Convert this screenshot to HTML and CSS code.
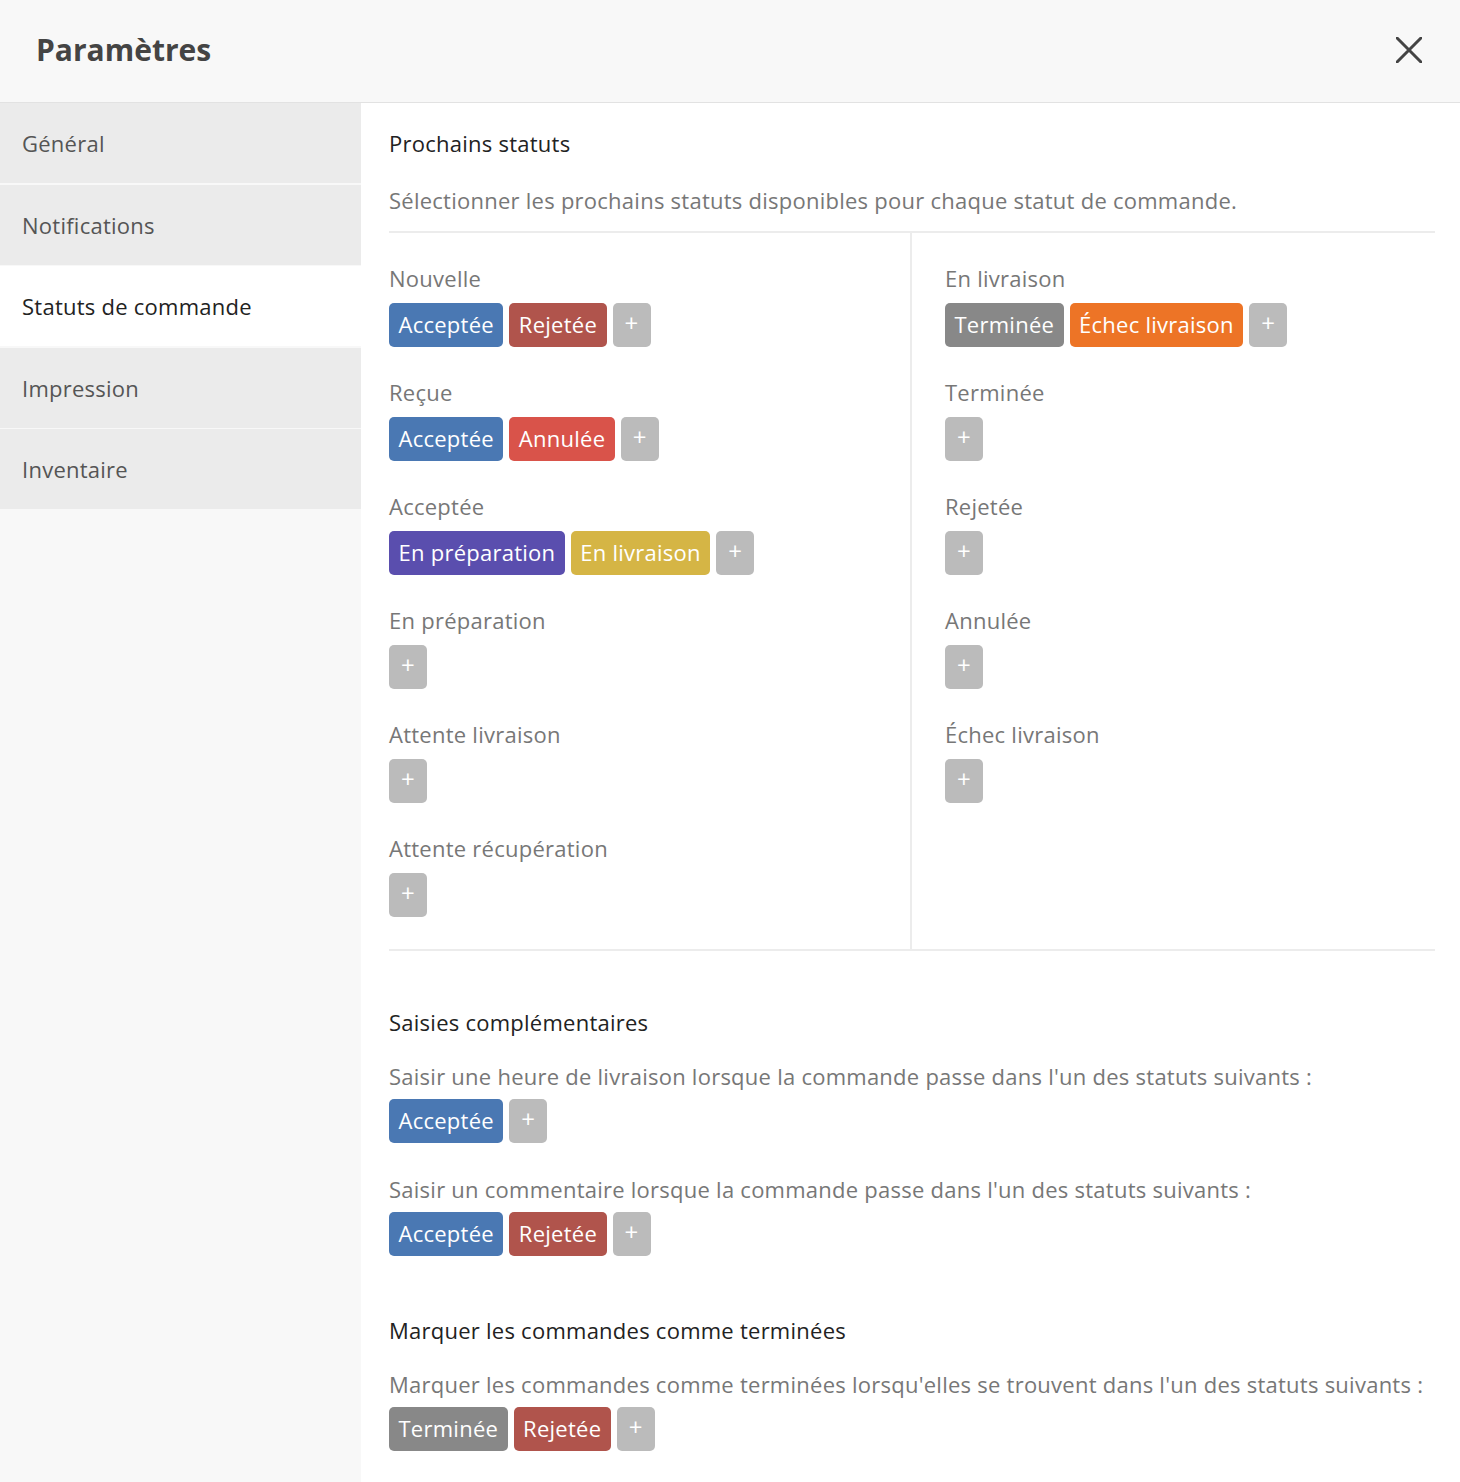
FILE: index.html
```html
<!DOCTYPE html>
<html lang="fr">
<head>
    <meta charset="UTF-8">
    <meta name="viewport" content="width=device-width, initial-scale=1.0">
    <title>Paramètres</title>
    <link rel="stylesheet" href="styles.css">
</head>
<body>

<div class="header">
    <h1 class="header-title">Paramètres</h1>
    <button class="close-btn" aria-label="Fermer">
        <svg width="26" height="26" viewBox="0 0 26 26">
            <path d="M1 1 L25 25 M25 1 L1 25" stroke="#444" stroke-width="3" stroke-linecap="round"/>
        </svg>
    </button>
</div>

<div class="layout">
    <nav class="sidebar">
        <a class="nav-item">Général</a>
        <a class="nav-item">Notifications</a>
        <a class="nav-item active">Statuts de commande</a>
        <a class="nav-item">Impression</a>
        <a class="nav-item">Inventaire</a>
    </nav>

    <main class="content">
        <h2 class="section-title">Prochains statuts</h2>
        <p class="section-desc">Sélectionner les prochains statuts disponibles pour chaque statut de commande.</p>

        <div class="status-grid">
            <div class="status-col">
                <div class="status-group">
                    <div class="status-label">Nouvelle</div>
                    <div class="tags">
                        <span class="tag tag-accepted">Acceptée</span>
                        <span class="tag tag-rejected">Rejetée</span>
                        <span class="tag tag-add">+</span>
                    </div>
                </div>
                <div class="status-group">
                    <div class="status-label">Reçue</div>
                    <div class="tags">
                        <span class="tag tag-accepted">Acceptée</span>
                        <span class="tag tag-cancelled">Annulée</span>
                        <span class="tag tag-add">+</span>
                    </div>
                </div>
                <div class="status-group">
                    <div class="status-label">Acceptée</div>
                    <div class="tags">
                        <span class="tag tag-preparing">En préparation</span>
                        <span class="tag tag-delivering">En livraison</span>
                        <span class="tag tag-add">+</span>
                    </div>
                </div>
                <div class="status-group">
                    <div class="status-label">En préparation</div>
                    <div class="tags">
                        <span class="tag tag-add">+</span>
                    </div>
                </div>
                <div class="status-group">
                    <div class="status-label">Attente livraison</div>
                    <div class="tags">
                        <span class="tag tag-add">+</span>
                    </div>
                </div>
                <div class="status-group">
                    <div class="status-label">Attente récupération</div>
                    <div class="tags">
                        <span class="tag tag-add">+</span>
                    </div>
                </div>
            </div>

            <div class="status-col">
                <div class="status-group">
                    <div class="status-label">En livraison</div>
                    <div class="tags">
                        <span class="tag tag-done">Terminée</span>
                        <span class="tag tag-failed">Échec livraison</span>
                        <span class="tag tag-add">+</span>
                    </div>
                </div>
                <div class="status-group">
                    <div class="status-label">Terminée</div>
                    <div class="tags">
                        <span class="tag tag-add">+</span>
                    </div>
                </div>
                <div class="status-group">
                    <div class="status-label">Rejetée</div>
                    <div class="tags">
                        <span class="tag tag-add">+</span>
                    </div>
                </div>
                <div class="status-group">
                    <div class="status-label">Annulée</div>
                    <div class="tags">
                        <span class="tag tag-add">+</span>
                    </div>
                </div>
                <div class="status-group">
                    <div class="status-label">Échec livraison</div>
                    <div class="tags">
                        <span class="tag tag-add">+</span>
                    </div>
                </div>
            </div>
        </div>

        <h2 class="section-title spaced">Saisies complémentaires</h2>
        <p class="field-desc first">Saisir une heure de livraison lorsque la commande passe dans l'un des statuts suivants :</p>
        <div class="tags">
            <span class="tag tag-accepted">Acceptée</span>
            <span class="tag tag-add">+</span>
        </div>
        <p class="field-desc">Saisir un commentaire lorsque la commande passe dans l'un des statuts suivants :</p>
        <div class="tags">
            <span class="tag tag-accepted">Acceptée</span>
            <span class="tag tag-rejected">Rejetée</span>
            <span class="tag tag-add">+</span>
        </div>

        <h2 class="section-title spaced wide">Marquer les commandes comme terminées</h2>
        <p class="field-desc first">Marquer les commandes comme terminées lorsqu'elles se trouvent dans l'un des statuts suivants :</p>
        <div class="tags">
            <span class="tag tag-done">Terminée</span>
            <span class="tag tag-rejected">Rejetée</span>
            <span class="tag tag-add">+</span>
        </div>
    </main>
</div>

</body>
</html>
```

FILE: styles.css
```css
body {
    font-family: "Open Sans", "Noto Sans", sans-serif;
    margin: 0;
    padding: 0;
    background-color: #f8f8f8;
    color: #222;
    letter-spacing: 0.25px;
}

.header {
    height: 103px;
    box-sizing: border-box;
    padding: 0 36px 3px;
    display: flex;
    justify-content: space-between;
    align-items: center;
    background-color: #f8f8f8;
    border-bottom: 1px solid #e2e2e2;
}

.header-title {
    margin: 0;
    font-size: 30px;
    font-weight: 700;
    color: #444;
    letter-spacing: 0;
}

.close-btn {
    background: none;
    border: none;
    padding: 0;
    margin-right: 2px;
    width: 26px;
    height: 26px;
    cursor: pointer;
}

.layout {
    display: flex;
    min-height: 1379px;
}

.sidebar {
    width: 361px;
    flex-shrink: 0;
    display: flex;
    flex-direction: column;
    gap: 1.6px;
    background-color: #f8f8f8;
}

.nav-item {
    height: 80px;
    display: flex;
    align-items: center;
    padding-left: 22px;
    background-color: #ebebeb;
    font-size: 22px;
    color: #555;
    cursor: pointer;
}

.nav-item.active {
    background-color: #fff;
    color: #222;
}

.content {
    flex: 1;
    background-color: #fff;
    padding: 25px 25px 30px 28px;
}

.section-title {
    margin: 0;
    font-size: 22px;
    line-height: 30px;
    font-weight: 400;
    color: #222;
}

.section-title.spaced {
    margin-top: 56px;
}

.section-title.wide {
    margin-top: 59px;
}

.section-desc {
    margin: 27px 0 0;
    padding-bottom: 16px;
    font-size: 22px;
    line-height: 30px;
    color: #777;
    border-bottom: 2px solid #ececec;
}

.status-grid {
    display: grid;
    grid-template-columns: 521px 1fr;
    border-bottom: 2px solid #ececec;
}

.status-col {
    padding: 31px 0 1px;
}

.status-col + .status-col {
    border-left: 2px solid #ececec;
    padding-left: 33px;
}

.status-group {
    margin-bottom: 31px;
}

.status-label {
    font-size: 22px;
    line-height: 28px;
    color: #777;
    margin-bottom: 11px;
}

.tags {
    display: flex;
    gap: 6px;
}

.tag {
    height: 44px;
    box-sizing: border-box;
    padding: 0 9.5px 3px;
    display: flex;
    align-items: center;
    border-radius: 5px;
    font-size: 22px;
    color: #fff;
}

.tag-accepted { background-color: #4a78b3; }
.tag-rejected { background-color: #b0544c; }
.tag-cancelled { background-color: #d9534a; }
.tag-preparing { background-color: #5a4eae; }
.tag-delivering { background-color: #d5b545; }
.tag-done { background-color: #888; }
.tag-failed { background-color: #ed7426; }

.tag-add {
    background-color: #bbb;
    width: 38px;
    justify-content: center;
    padding: 0 0 5px;
    font-size: 24px;
    cursor: pointer;
}

.field-desc {
    margin: 32px 0 9px;
    font-size: 22px;
    line-height: 28px;
    color: #777;
}

.field-desc.first {
    margin-top: 25px;
}
```
